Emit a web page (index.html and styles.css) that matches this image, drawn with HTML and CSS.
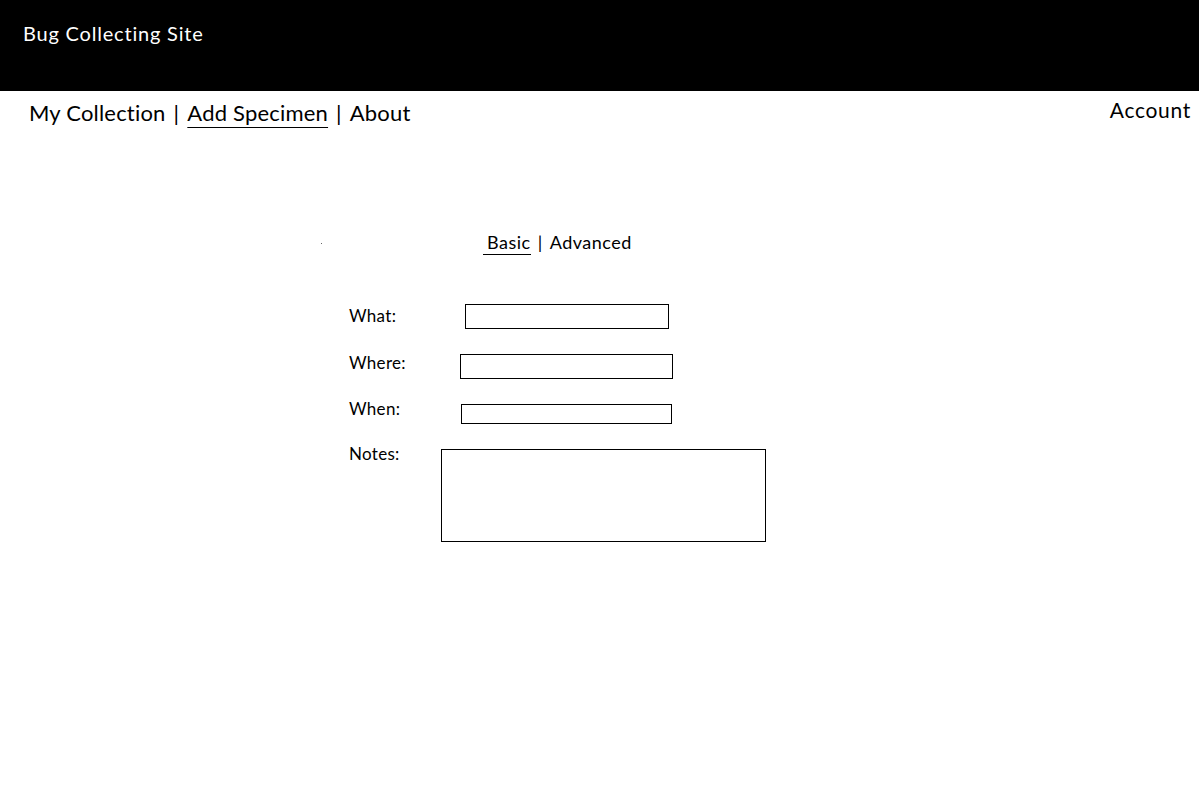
FILE: index.html
```html
<!DOCTYPE html>
<html lang="en">
<head>
<meta charset="utf-8">
<title>Bug Collecting Site</title>
<link rel="stylesheet" href="styles.css">
</head>
<body>
<header class="site-header">
  <div class="site-title">Bug Collecting Site</div>
</header>
<nav class="main-nav">
  <div class="nav-links">
    <a class="nav-link">My Collection</a>
    <span class="sep">|</span>
    <a class="nav-link active">Add Specimen</a>
    <span class="sep">|</span>
    <a class="nav-link">About</a>
  </div>
  <a class="account">Account</a>
</nav>
<main class="content">
  <div class="tabs">
    <span class="dot"></span>
    <a class="tab active">Basic</a>
    <span class="tab-sep">|</span>
    <a class="tab">Advanced</a>
  </div>
  <form class="form">
    <div class="row row-what">
      <label class="label">What:</label>
      <span class="field field-what"></span>
    </div>
    <div class="row row-where">
      <label class="label">Where:</label>
      <span class="field field-where"></span>
    </div>
    <div class="row row-when">
      <label class="label">When:</label>
      <span class="field field-when"></span>
    </div>
    <div class="row row-notes">
      <label class="label">Notes:</label>
      <span class="field field-notes"></span>
    </div>
  </form>
</main>
</body>
</html>
```

FILE: styles.css
```css
html, body {
  margin: 0;
  padding: 0;
  background: #fff;
  color: #000;
  font-family: Lato, "Open Sans", sans-serif;
}

.site-header {
  background: #000;
  height: 91px;
  box-sizing: border-box;
  padding: 21px 0 0 23px;
}

.site-title {
  color: #fff;
  font-size: 20px;
  line-height: 24px;
  letter-spacing: 0.8px;
}

.main-nav {
  display: flex;
  justify-content: space-between;
  align-items: flex-start;
  padding: 0 8px 0 29px;
}

.nav-links {
  display: flex;
  align-items: baseline;
  gap: 8px;
  margin-top: 9px;
  font-size: 22px;
  line-height: 26px;
  letter-spacing: 0.2px;
}

.nav-link.active {
  text-decoration: underline;
  text-decoration-thickness: 1px;
  text-underline-offset: 6px;
}

.account {
  margin-top: 6px;
  font-size: 21px;
  line-height: 25px;
  letter-spacing: 0.7px;
}

.content {
  padding-top: 105px;
}

.tabs {
  display: flex;
  align-items: baseline;
  font-size: 18px;
  line-height: 22px;
  letter-spacing: 0.5px;
}

.dot {
  display: inline-block;
  width: 1px;
  height: 1px;
  background: #666;
  margin-left: 321px;
  align-self: center;
}

.tab.active {
  margin-left: 161px;
  padding-left: 4px;
  padding-bottom: 1px;
  border-bottom: 1px solid #000;
}

.tab-sep {
  margin: 0 7px;
}

.form {
  margin: 49px 0 0 349px;
  display: flex;
  flex-direction: column;
}

.row {
  display: flex;
  align-items: flex-start;
}

.label {
  width: 92px;
  padding-top: 2px;
  font-size: 17px;
  line-height: 20px;
  letter-spacing: 0.3px;
}

.field {
  display: block;
  box-sizing: border-box;
  border: 1px solid #000;
}

.row-what { height: 47px; }
.row-where { height: 46px; }
.row-when { height: 45px; }

.field-what {
  margin: 0 0 0 24px;
  width: 204px;
  height: 25px;
}

.field-where {
  margin: 3px 0 0 19px;
  width: 213px;
  height: 25px;
}

.field-when {
  margin: 7px 0 0 20px;
  width: 211px;
  height: 20px;
}

.field-notes {
  margin: 7px 0 0 0;
  width: 325px;
  height: 93px;
}
```
